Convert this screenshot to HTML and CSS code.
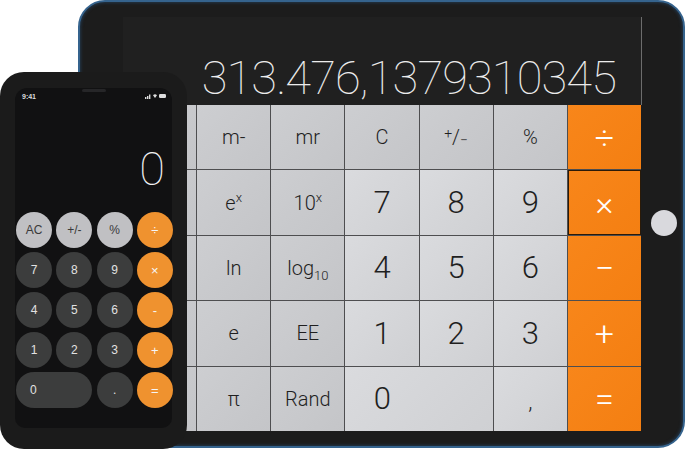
FILE: index.html
```html
<!DOCTYPE html>
<html>
<head>
<meta charset="utf-8">
<link rel="stylesheet" href="styles.css">
</head>
<body>
<div class="stage">
  <div class="tablet">
    <div class="tscreen">
      <div class="tdisplay">313.476,1379310345</div>
      <div class="tkeys">
        <div class="k fn"></div>
        <div class="k fn"><span>m-</span></div>
        <div class="k fn"><span>mr</span></div>
        <div class="k fn"><span>C</span></div>
        <div class="k fn"><span class="pm"><sup>+</sup>/<sub>−</sub></span></div>
        <div class="k fn"><span>%</span></div>
        <div class="k op"><span>÷</span></div>

        <div class="k fn"></div>
        <div class="k fn"><span>e<sup>x</sup></span></div>
        <div class="k fn"><span>10<sup>x</sup></span></div>
        <div class="k num"><span>7</span></div>
        <div class="k num"><span>8</span></div>
        <div class="k num"><span>9</span></div>
        <div class="k op sel"><span>×</span></div>

        <div class="k fn"></div>
        <div class="k fn"><span>ln</span></div>
        <div class="k fn"><span>log<sub>10</sub></span></div>
        <div class="k num"><span>4</span></div>
        <div class="k num"><span>5</span></div>
        <div class="k num"><span>6</span></div>
        <div class="k op"><span>−</span></div>

        <div class="k fn"></div>
        <div class="k fn"><span>e</span></div>
        <div class="k fn"><span>EE</span></div>
        <div class="k num"><span>1</span></div>
        <div class="k num"><span>2</span></div>
        <div class="k num"><span>3</span></div>
        <div class="k op"><span>+</span></div>

        <div class="k fn"></div>
        <div class="k fn"><span>π</span></div>
        <div class="k fn"><span>Rand</span></div>
        <div class="k num zero"><span>0</span></div>
        <div class="k num comma"><span>,</span></div>
        <div class="k op"><span>=</span></div>
      </div>
    </div>
    <div class="home"></div>
  </div>

  <div class="phone">
    <div class="speaker"></div>
    <div class="pscreen">
      <div class="status">
        <span class="time">9:41</span>
        <span class="icons">
          <svg width="22" height="6" viewBox="0 0 22 6">
            <rect x="0" y="4" width="1.4" height="2" fill="#ddd"/>
            <rect x="2" y="3" width="1.4" height="3" fill="#ddd"/>
            <rect x="4" y="1.5" width="1.4" height="4.5" fill="#ddd"/>
            <path d="M8 2.2 Q10 0.4 12 2.2 L10 5 Z" fill="#ddd"/>
            <rect x="14" y="1" width="7" height="4" rx="1.2" fill="#ddd"/>
          </svg>
        </span>
      </div>
      <div class="pdisplay">0</div>
      <div class="pkeys">
        <div class="b lt">AC</div>
        <div class="b lt">+/-</div>
        <div class="b lt">%</div>
        <div class="b or">÷</div>
        <div class="b dk">7</div>
        <div class="b dk">8</div>
        <div class="b dk">9</div>
        <div class="b or">×</div>
        <div class="b dk">4</div>
        <div class="b dk">5</div>
        <div class="b dk">6</div>
        <div class="b or">-</div>
        <div class="b dk">1</div>
        <div class="b dk">2</div>
        <div class="b dk">3</div>
        <div class="b or">+</div>
        <div class="b dk wide">0</div>
        <div class="b dk">.</div>
        <div class="b or">=</div>
      </div>
    </div>
  </div>
</div>
</body>
</html>
```
FILE: styles.css
```css
html, body {
  margin: 0;
  padding: 0;
  background: #ffffff;
}

.stage {
  position: relative;
  width: 685px;
  height: 451px;
  overflow: hidden;
  font-family: "Liberation Sans", Arial, sans-serif;
}

/* ---------- Tablet ---------- */
.tablet {
  position: absolute;
  left: 78px;
  top: 0;
  width: 607px;
  height: 448px;
  box-sizing: border-box;
  border-radius: 27px;
  background: #1c1c1c;
  border: 2px solid #35638d;
  box-shadow: inset 0 0 3px 1px #22364a;
  padding: 15px 42px 15px 43px;
}

.tscreen {
  display: flex;
  flex-direction: column;
  height: 100%;
  background: #202020;
}

.tdisplay {
  height: 88px;
  box-sizing: border-box;
  display: flex;
  align-items: flex-end;
  justify-content: flex-end;
  padding: 0 25px 4px 0;
  color: #ececec;
  font-family: Roboto, sans-serif;
  font-weight: 100;
  font-size: 47px;
  letter-spacing: -0.9px;
  line-height: 1;
  box-shadow: 1px 0 0 #6c6c6c;
}

.tkeys {
  flex: 1;
  display: grid;
  grid-template-columns: repeat(7, 1fr);
  grid-template-rows: repeat(5, 1fr);
  gap: 1px;
  background: #4e4e50;
}

.k {
  display: flex;
  align-items: center;
  justify-content: center;
  color: #1f1f1f;
  font-family: Roboto, sans-serif;
  font-weight: 300;
  font-size: 20px;
  line-height: 1;
}

.k sup {
  font-size: 13px;
  vertical-align: 8px;
  line-height: 0;
}

.k sub {
  font-size: 13px;
  vertical-align: -5px;
  line-height: 0;
}

.pm sup { font-size: 14px; vertical-align: 6px; }
.pm sub { font-size: 14px; vertical-align: -1px; }

.fn {
  background: linear-gradient(135deg, #cdced1 0%, #c4c5c8 100%);
}

.num {
  background: linear-gradient(135deg, #dadbde 0%, #cfd0d3 100%);
  font-weight: 300;
  font-size: 31px;
}

.op {
  background: linear-gradient(135deg, #f8861a 0%, #f47f12 100%);
  color: #ffffff;
  font-weight: 300;
  font-size: 34px;
}

.sel {
  box-shadow: inset 0 0 0 1px #2b1a08;
}

.zero {
  grid-column: span 2;
  justify-content: flex-start;
}

.zero span {
  width: 74px;
  text-align: center;
}

.comma {
  align-items: flex-end;
  padding-bottom: 18px;
  box-sizing: border-box;
  font-size: 22px;
}

.home {
  position: absolute;
  left: 571px;
  top: 208px;
  width: 26px;
  height: 26px;
  border-radius: 50%;
  background: #d9d9dd;
}

/* ---------- Phone ---------- */
.phone {
  position: absolute;
  left: 0;
  top: 72px;
  width: 187px;
  height: 377px;
  box-sizing: border-box;
  border-radius: 24px;
  background: #1b1b1b;
  padding: 16px 15px 21px 15px;
}

.speaker {
  position: absolute;
  left: 82px;
  top: 17px;
  width: 24px;
  height: 3px;
  border-radius: 2px;
  background: #262628;
}

.pscreen {
  display: flex;
  flex-direction: column;
  height: 100%;
  background: #111112;
  border-radius: 12px 12px 10px 10px;
}

.status {
  height: 16px;
  display: flex;
  align-items: center;
  justify-content: space-between;
  padding: 0 5px 0 7px;
}

.time {
  color: #dcdcdc;
  font-size: 7px;
  font-weight: bold;
  line-height: 1;
}

.icons {
  display: flex;
}

.pdisplay {
  height: 108px;
  box-sizing: border-box;
  display: flex;
  align-items: flex-end;
  justify-content: flex-end;
  padding: 0 7px 20px 0;
  color: #f2f2f2;
  font-family: Roboto, sans-serif;
  font-weight: 100;
  font-size: 47px;
  line-height: 1;
}

.pkeys {
  display: grid;
  grid-template-columns: repeat(4, 36px);
  grid-auto-rows: 36px;
  gap: 4px 4.3px;
  padding-left: 1px;
}

.b {
  border-radius: 18px;
  display: flex;
  align-items: center;
  justify-content: center;
  font-size: 12px;
  line-height: 1;
}

.lt {
  background: #c0c0c3;
  color: #3a3a3a;
}

.dk {
  background: #3c3d3d;
  color: #e2e2e2;
}

.or {
  background: #ef922f;
  color: #f6f6f6;
  font-size: 13px;
}

.wide {
  grid-column: span 2;
  justify-content: flex-start;
  padding-left: 14px;
}
```
